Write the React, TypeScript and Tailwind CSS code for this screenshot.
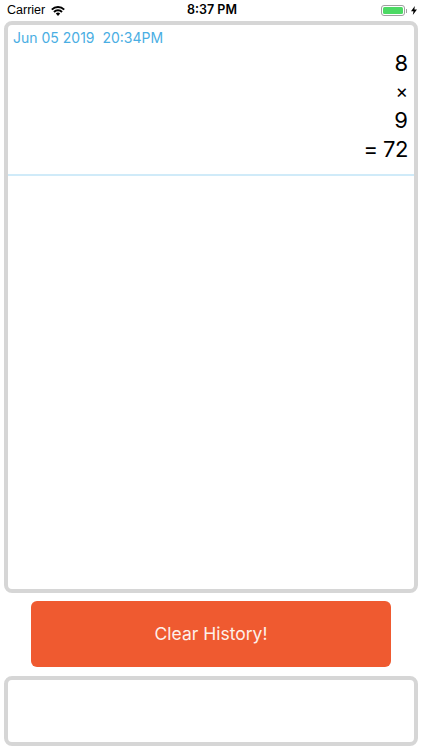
const font = 'font-["Inter","Liberation_Sans",sans-serif]';

function StatusBar() {
  return (
    <div className='grid h-[21px] grid-cols-[1fr_auto_1fr] items-center pl-[7px] pr-[5px] leading-none text-black font-["Liberation_Sans",sans-serif]'>
      <div className="flex items-center gap-[6px]">
        <span className="text-[12.5px]">Carrier</span>
        <svg width="14" height="10" viewBox="0 0 14 10" fill="none">
          <path d="M0.8 3.6 A8.8 8.8 0 0 1 13.2 3.6" stroke="black" strokeWidth="2" />
          <path d="M3 6 A5.6 5.6 0 0 1 11 6" stroke="black" strokeWidth="2" />
          <path d="M4.8 7.6 A3.2 3.2 0 0 1 9.2 7.6 L7 10 Z" fill="black" />
        </svg>
      </div>
      <span className='text-[12.5px] font-semibold font-["Inter",sans-serif]'>8:37 PM</span>
      <div className="flex items-center justify-end gap-[4px]">
        <div className="flex items-center gap-[1px]">
          <div className="h-[11px] w-[24px] rounded-[3px] border border-[#a0a0a0] p-[1px]">
            <div className="h-full w-full rounded-[1.5px] bg-[#4cd964]" />
          </div>
          <div className="h-[4px] w-[1px] bg-[#a0a0a0]" />
        </div>
        <svg width="6" height="9" viewBox="0 0 6 10" preserveAspectRatio="none">
          <path d="M3.8 0 L0 5.8 H2.5 L1.8 10 L6 3.8 H3.4 Z" fill="black" />
        </svg>
      </div>
    </div>
  );
}

export default function App() {
  return (
    <div className={`flex h-[750px] w-[422px] flex-col bg-white ${font}`}>
      <StatusBar />
      <div className="mx-[4px] h-[572px] overflow-hidden rounded-[8px] border-[4px] border-[#d6d6d6]">
        <div className="flex h-[151px] flex-col border-b-2 border-[#d0ebf9]">
          <div className="pl-[5px] pt-[4px] text-[14px] leading-[18px] whitespace-pre text-[#4aaee3]">
            Jun 05 2019  20:34PM
          </div>
          <div className="flex flex-col items-end pr-[6px] pt-[2px] text-[22px] leading-[28.7px] text-black">
            <span>8</span>
            <span className="text-[19px]">×</span>
            <span>9</span>
            <span className="tracking-[-0.5px]">= 72</span>
          </div>
        </div>
      </div>
      <button className="mx-auto mt-[8px] h-[66px] w-[360px] rounded-[6px] bg-[#ef5a30] text-[17.5px] text-[#fdf0ea]">
        Clear History!
      </button>
      <div className="mx-[4px] mt-[9px] h-[70px] rounded-[8px] border-[4px] border-[#d6d6d6]" />
    </div>
  );
}
